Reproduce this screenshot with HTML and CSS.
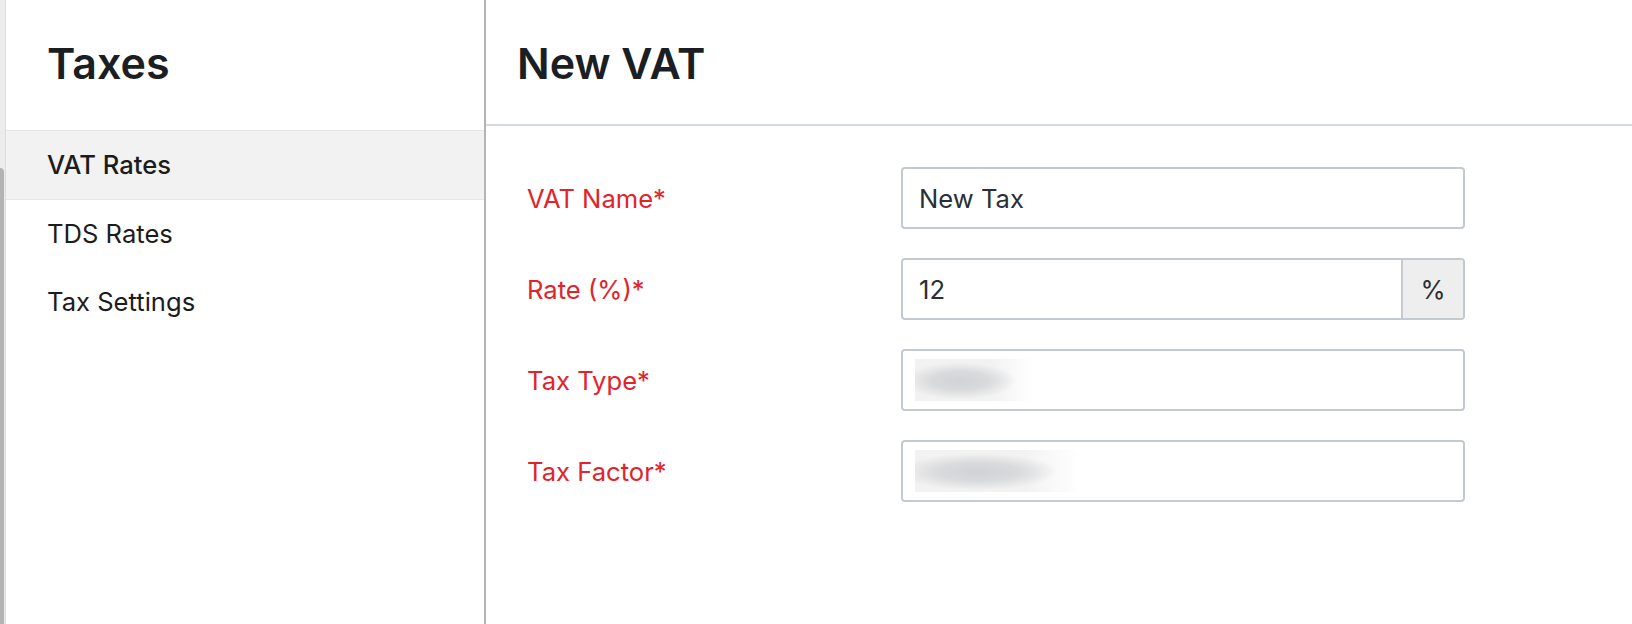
FILE: index.html
```html
<!DOCTYPE html>
<html lang="en">
<head>
<meta charset="utf-8">
<title>Taxes - New VAT</title>
<link rel="stylesheet" href="styles.css">
</head>
<body>
<div class="edge"><div class="edge-thumb"></div></div>
<aside class="sidebar">
  <div class="sidebar-head"><h1 class="title">Taxes</h1></div>
  <nav class="nav">
    <a class="nav-item active">VAT Rates</a>
    <a class="nav-item">TDS Rates</a>
    <a class="nav-item">Tax Settings</a>
  </nav>
</aside>
<main class="main">
  <div class="main-head"><h1 class="title">New VAT</h1></div>
  <form class="form">
    <label class="label">VAT Name*</label>
    <div class="field"><span class="field-text">New Tax</span></div>
    <label class="label">Rate (%)*</label>
    <div class="field"><span class="field-text grow">12</span><span class="addon">%</span></div>
    <label class="label">Tax Type*</label>
    <div class="field"><span class="blur blur-a"></span></div>
    <label class="label">Tax Factor*</label>
    <div class="field"><span class="blur blur-b"></span></div>
  </form>
</main>
</body>
</html>
```
FILE: styles.css
```css
* { box-sizing: border-box; }
html, body { margin: 0; padding: 0; }
body {
  display: flex;
  height: 624px;
  overflow: hidden;
  background: #fff;
  font-family: Inter, "Noto Sans", sans-serif;
  color: #1d2024;
}
.edge {
  width: 6px;
  background: #ececec;
  border-right: 1px solid #dcdcdc;
  display: flex;
  flex-direction: column;
}
.edge-thumb {
  margin-top: 168px;
  width: 4px;
  flex: 1;
  background: #b3b3b3;
  border-radius: 0 4px 0 0;
}
.sidebar {
  width: 480px;
  border-right: 2px solid #b4b4b4;
  display: flex;
  flex-direction: column;
}
.sidebar-head {
  height: 131px;
  padding: 38px 0 0 41px;
  border-bottom: 1px solid #e6e6e6;
}
.title {
  margin: 0;
  font-size: 43px;
  line-height: 1.2;
  font-weight: 600;
  color: #1b1e22;
}
.nav { display: flex; flex-direction: column; }
.nav-item {
  display: block;
  padding: 14.8px 41px;
  font-size: 25.6px;
  line-height: 38.4px;
  color: #1c1c1c;
}
.nav-item.active {
  background: #f2f2f2;
  border-bottom: 1px solid #e6e6e6;
  height: 69px;
  font-weight: 500;
}
.main { flex: 1; display: flex; flex-direction: column; }
.main-head {
  height: 126px;
  padding: 38px 0 0 31px;
  border-bottom: 2px solid #d6dbe0;
}
.form {
  display: grid;
  grid-template-columns: 374px 564px;
  grid-auto-rows: 62px;
  row-gap: 29px;
  padding: 41px 0 0 41px;
  align-items: center;
}
.label {
  font-size: 25.6px;
  color: #e1232a;
}
.field {
  height: 62px;
  border: 2px solid #c3cad1;
  border-radius: 4px;
  display: flex;
  align-items: center;
  overflow: hidden;
}
.field-text {
  padding-left: 16px;
  font-size: 25.6px;
  color: #2a2f35;
}
.grow { flex: 1; }
.addon {
  align-self: stretch;
  width: 62px;
  background: #eeeeee;
  border-left: 2px solid #c3cad1;
  display: flex;
  align-items: center;
  justify-content: center;
  font-size: 25.6px;
  color: #2a2f35;
}
.blur {
  display: block;
  margin-left: 12px;
  height: 42px;
  background:
    radial-gradient(ellipse 48% 44% at 38% 52%, #d1d2d5 0%, #d9dadc 50%, rgba(255,255,255,0) 100%),
    linear-gradient(to right, #f2f2f2 65%, #ffffff 100%);
}
.blur-a { width: 118px; }
.blur-b { width: 166px; }
```
